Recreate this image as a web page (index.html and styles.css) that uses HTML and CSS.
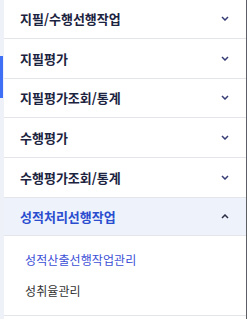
FILE: index.html
```html
<!DOCTYPE html>
<html lang="ko">
<head>
  <meta charset="UTF-8">
  <meta name="viewport" content="width=device-width, initial-scale=1.0">
  <title>메뉴</title>
  <link rel="stylesheet" href="styles.css">
</head>
<body>
  <div class="layout">
    <div class="rail"><span class="rail-mark"></span></div>

    <nav class="menu">
      <div class="menu-item">
        <span>지필/수행선행작업</span>
        <svg class="chevron" viewBox="0 0 8 5"><path d="M1 1l3 3 3-3"/></svg>
      </div>
      <div class="menu-item">
        <span>지필평가</span>
        <svg class="chevron" viewBox="0 0 8 5"><path d="M1 1l3 3 3-3"/></svg>
      </div>
      <div class="menu-item">
        <span>지필평가조회/통계</span>
        <svg class="chevron" viewBox="0 0 8 5"><path d="M1 1l3 3 3-3"/></svg>
      </div>
      <div class="menu-item">
        <span>수행평가</span>
        <svg class="chevron" viewBox="0 0 8 5"><path d="M1 1l3 3 3-3"/></svg>
      </div>
      <div class="menu-item">
        <span>수행평가조회/통계</span>
        <svg class="chevron" viewBox="0 0 8 5"><path d="M1 1l3 3 3-3"/></svg>
      </div>
      <div class="menu-item open">
        <span>성적처리선행작업</span>
        <svg class="chevron" viewBox="0 0 8 5"><path d="M1 4l3-3 3 3"/></svg>
      </div>
      <ul class="submenu">
        <li class="active">성적산출선행작업관리</li>
        <li>성취율관리</li>
      </ul>
    </nav>

    <div class="gutter"></div>
  </div>
</body>
</html>
```

FILE: styles.css
```css
* {
  margin: 0;
  padding: 0;
  box-sizing: border-box;
}

body {
  background: #fff;
  font-family: "Noto Sans CJK KR", "Noto Sans", sans-serif;
  overflow: hidden;
}

.layout {
  display: flex;
  height: 319px;
}

/* 왼쪽 레일 */
.rail {
  width: 4px;
  background: #eef1f7;
}

.rail-mark {
  display: block;
  width: 3px;
  height: 42px;
  margin-top: 56px;
  background: #3f6ff5;
}

/* 메뉴 */
.menu {
  flex: 1;
  margin-top: -1px;
  border-right: 1px solid #5c5f66;
}

.menu-item {
  display: flex;
  align-items: center;
  justify-content: space-between;
  height: 39.75px;
  padding: 0 16px;
  border-bottom: 1px solid #e3e5ea;
  font-size: 13px;
  font-weight: 700;
  color: #1c2340;
}

.menu-item.open {
  height: 38.5px;
  background: #eef2fb;
  color: #2a4dd0;
}

.chevron {
  width: 8px;
  height: 5px;
  margin-right: 1px;
  fill: none;
  stroke: #363c74;
  stroke-width: 1.5;
}

.menu-item.open .chevron {
  stroke: #2b2f45;
}

.submenu {
  list-style: none;
  padding: 8px 0 9px;
  border-bottom: 1px solid #e3e5ea;
}

.submenu li {
  height: 31px;
  line-height: 31px;
  padding-left: 21px;
  font-size: 12px;
  letter-spacing: 0.1px;
  color: #333;
}

.submenu li.active {
  color: #3b4fd6;
}

.gutter {
  width: 3px;
}
```
